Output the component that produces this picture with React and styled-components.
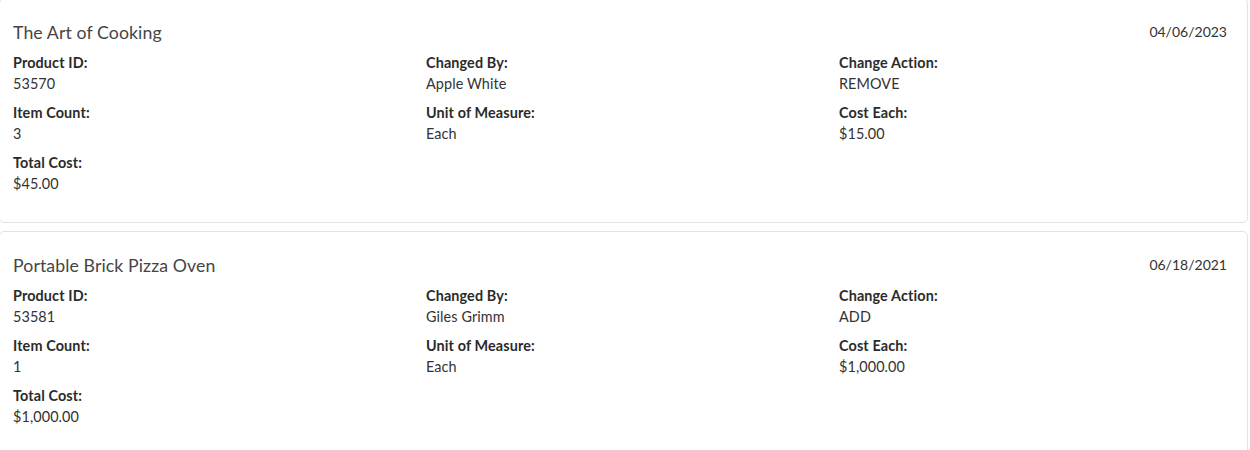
import React from "react";
import styled, { createGlobalStyle } from "styled-components";

const Global = createGlobalStyle`
  html, body { margin: 0; padding: 0; background: #fff; }
  body { font-family: "Lato", "Open Sans", sans-serif; color: #333; }
`;

const List = styled.div`
  display: flex;
  flex-direction: column;
  gap: 8px;
  margin: -2px 0 0 -1px;
  width: 1249px;
`;

const Card = styled.section`
  box-sizing: border-box;
  border: 1px solid #e2e2e4;
  border-radius: 5px;
  background: #fff;
  padding: 22px 20px 27px 13px;
  height: 225px;
`;

const Header = styled.div`
  display: flex;
  justify-content: space-between;
  align-items: flex-start;
  margin-bottom: 7px;
`;

const Title = styled.h2`
  margin: 0;
  font-size: 17.7px;
  line-height: 24px;
  font-weight: 400;
  letter-spacing: 0.1px;
  color: #454545;
`;

const DateText = styled.div`
  font-size: 14px;
  line-height: 21px;
  color: #333;
`;

const Grid = styled.div`
  display: grid;
  grid-template-columns: 413px 413px 1fr;
  row-gap: 8px;
`;

const Field = styled.div`
  display: flex;
  flex-direction: column;
`;

const Label = styled.span`
  font-size: 14.4px;
  line-height: 21px;
  font-weight: 700;
  letter-spacing: 0.12px;
  color: #2b2b2b;
`;

const Value = styled.span`
  font-size: 14.4px;
  line-height: 21px;
  letter-spacing: 0.1px;
  color: #333;
`;

const items = [
  {
    title: "The Art of Cooking",
    date: "04/06/2023",
    fields: [
      ["Product ID:", "53570"],
      ["Changed By:", "Apple White"],
      ["Change Action:", "REMOVE"],
      ["Item Count:", "3"],
      ["Unit of Measure:", "Each"],
      ["Cost Each:", "$15.00"],
      ["Total Cost:", "$45.00"],
    ],
  },
  {
    title: "Portable Brick Pizza Oven",
    date: "06/18/2021",
    fields: [
      ["Product ID:", "53581"],
      ["Changed By:", "Giles Grimm"],
      ["Change Action:", "ADD"],
      ["Item Count:", "1"],
      ["Unit of Measure:", "Each"],
      ["Cost Each:", "$1,000.00"],
      ["Total Cost:", "$1,000.00"],
    ],
  },
];

export default function App() {
  return (
    <>
      <Global />
      <List>
        {items.map((it) => (
          <Card key={it.title}>
            <Header>
              <Title>{it.title}</Title>
              <DateText>{it.date}</DateText>
            </Header>
            <Grid>
              {it.fields.map(([l, v]) => (
                <Field key={l}>
                  <Label>{l}</Label>
                  <Value>{v}</Value>
                </Field>
              ))}
            </Grid>
          </Card>
        ))}
      </List>
    </>
  );
}
